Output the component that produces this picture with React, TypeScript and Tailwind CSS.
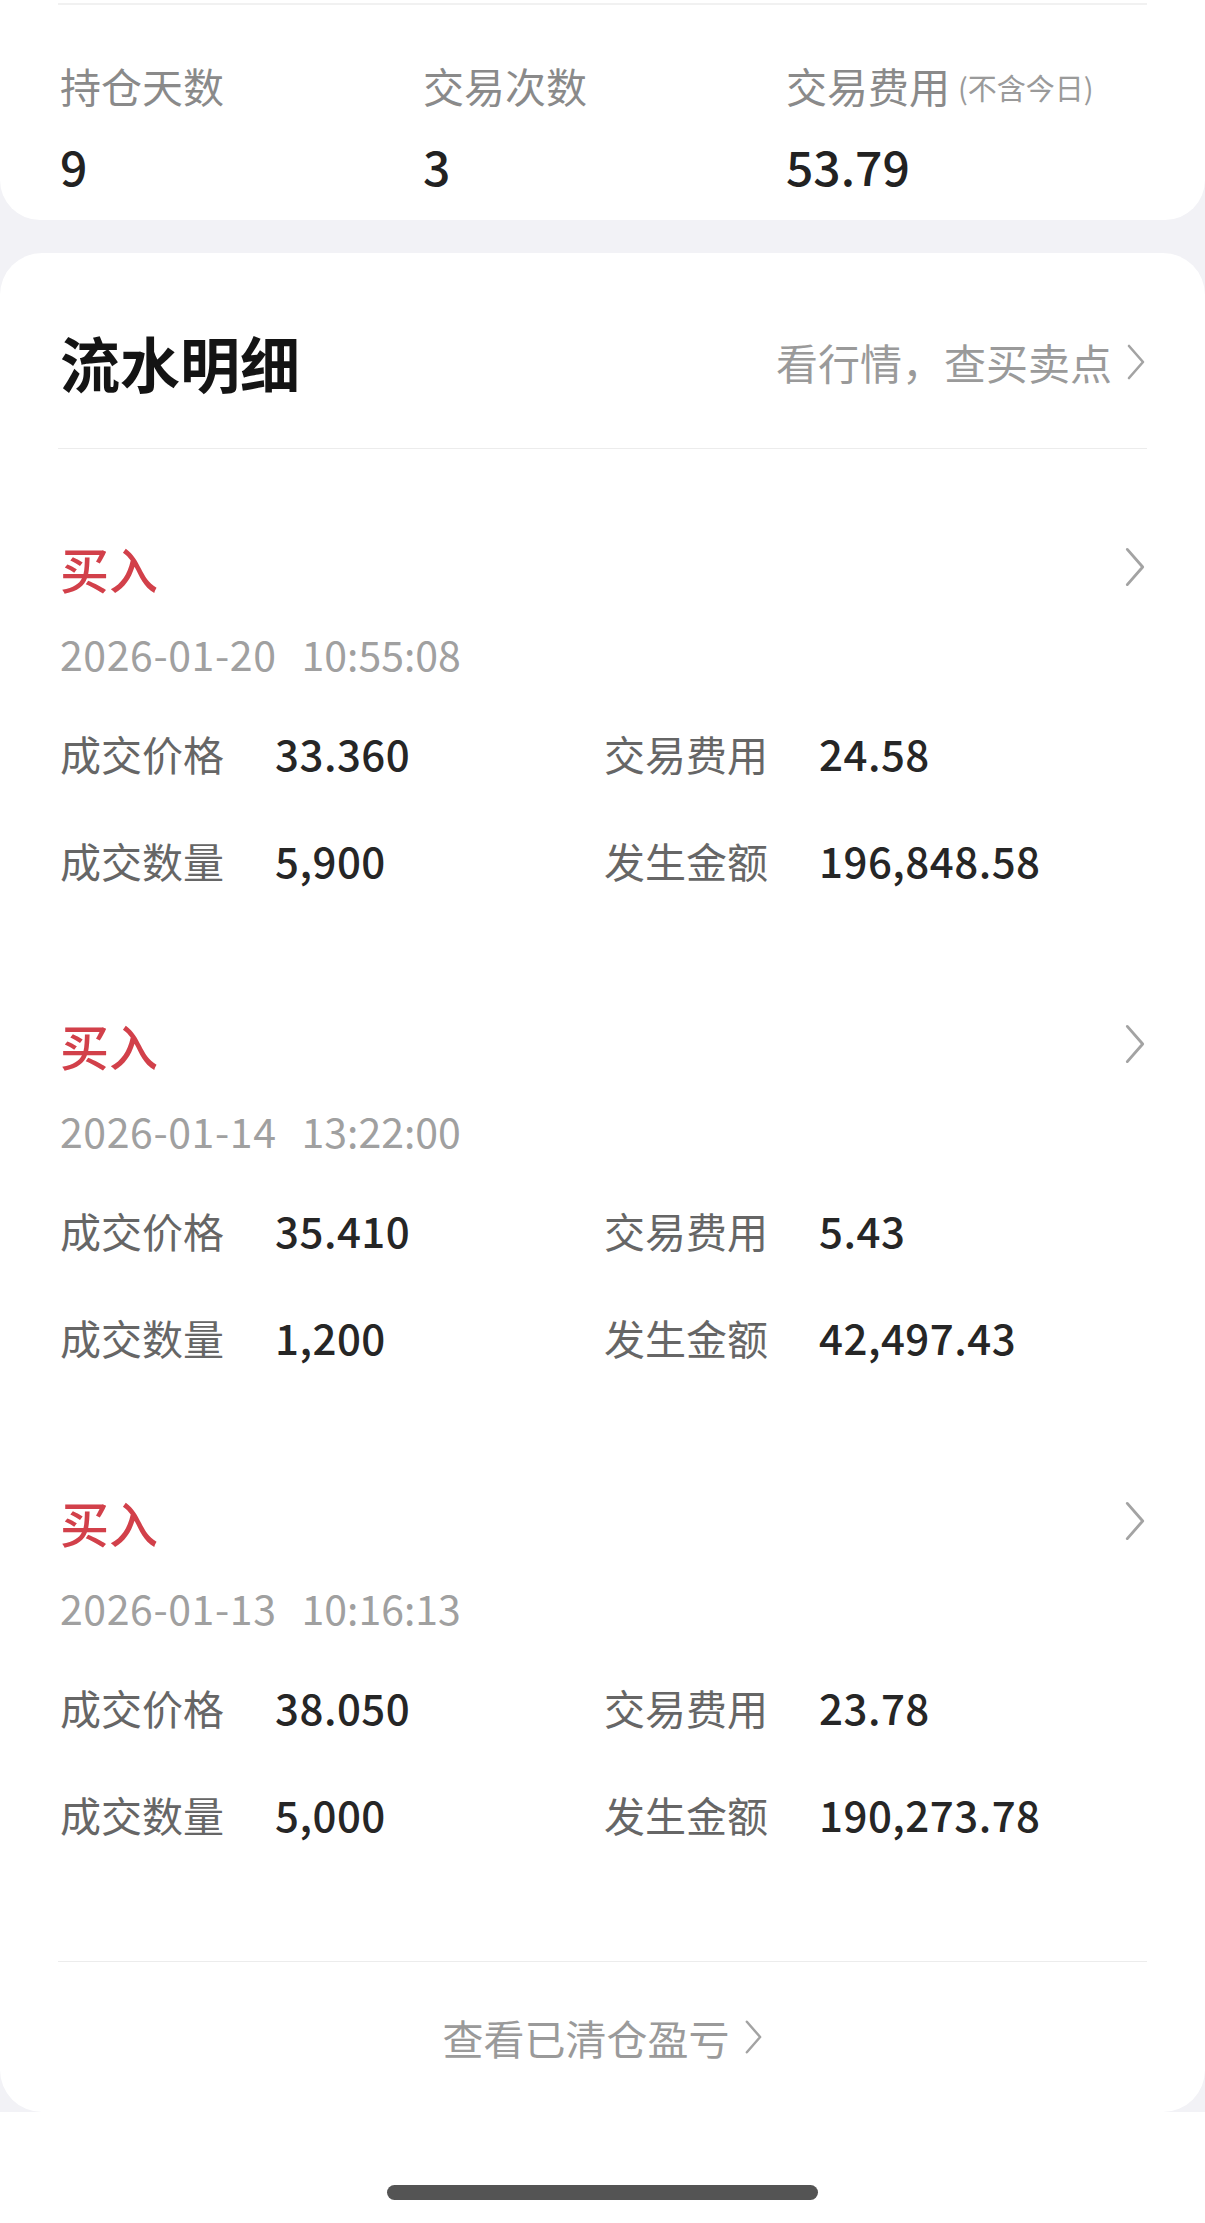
import React from "react";

interface Trade {
  side: string;
  date: string;
  time: string;
  price: string;
  fee: string;
  qty: string;
  amount: string;
}

const trades: Trade[] = [
  { side: "买入", date: "2026-01-20", time: "10:55:08", price: "33.360", fee: "24.58", qty: "5,900", amount: "196,848.58" },
  { side: "买入", date: "2026-01-14", time: "13:22:00", price: "35.410", fee: "5.43", qty: "1,200", amount: "42,497.43" },
  { side: "买入", date: "2026-01-13", time: "10:16:13", price: "38.050", fee: "23.78", qty: "5,000", amount: "190,273.78" },
];

const Chevron = ({ className }: { className?: string }) => (
  <svg viewBox="0 0 20 36" className={className} fill="none">
    <path d="M3 2 L17 18 L3 34" stroke="currentColor" strokeWidth="2.6" strokeLinecap="round" strokeLinejoin="round" />
  </svg>
);

const Field = ({ label, value }: { label: string; value: string }) => (
  <div className="flex items-center h-[40px]">
    <span className="w-[215px] text-[41px] leading-none text-[#666666]">{label}</span>
    <span className="text-[42px] leading-none font-medium tracking-[0.5px] text-[#262626]">{value}</span>
  </div>
);

const TradeItem = ({ t }: { t: Trade }) => (
  <div className="pt-[95px] pb-[46px]">
    <div className="flex items-center justify-between h-[46px]">
      <span className="text-[49px] leading-none font-medium text-[#d2404a]">{t.side}</span>
      <Chevron className="w-[22px] h-[42px] text-[#a3a3a3] mr-[1px]" />
    </div>
    <div className="mt-[43px] h-[40px] flex items-center gap-[25px] text-[41px] leading-none text-[#a0a0a0]">
      <span className="tracking-[0.6px]">{t.date}</span>
      <span>{t.time}</span>
    </div>
    <div className="mt-[60px] grid grid-cols-[544px_1fr]">
      <Field label="成交价格" value={t.price} />
      <Field label="交易费用" value={t.fee} />
    </div>
    <div className="mt-[67px] grid grid-cols-[544px_1fr]">
      <Field label="成交数量" value={t.qty} />
      <Field label="发生金额" value={t.amount} />
    </div>
  </div>
);

export default function App() {
  return (
    <div
      className="w-[1205px] h-[2223px] bg-[#f2f2f6] flex flex-col"
      style={{ fontFamily: '"Noto Sans CJK SC", "Noto Sans", sans-serif' }}
    >
      {/* summary card */}
      <div className="h-[220px] bg-white rounded-b-[40px] px-[58px] pt-[3px]">
        <div className="h-[2px] bg-[#f1f1f1]" />
        <div className="grid grid-cols-[363px_363px_1fr] pl-[2px] pt-[58px]">
          {[
            ["持仓天数", "9"],
            ["交易次数", "3"],
            ["交易费用", "53.79"],
          ].map(([label, value], i) => (
            <div key={label} className="flex flex-col">
              <div className="h-[44px] flex items-center">
                <span className="text-[41px] leading-none text-[#8a8a8a]">{label}</span>
                {i === 2 && <span className="ml-[8px] mt-[4px] text-[29px] leading-none text-[#9a9a9a]">(不含今日)</span>}
              </div>
              <div className="mt-[35px] h-[46px] flex items-center text-[48px] leading-none font-medium text-[#222222]">
                {value}
              </div>
            </div>
          ))}
        </div>
      </div>

      {/* trade list card */}
      <div className="mt-[33px] h-[1859px] bg-white rounded-[42px] px-[58px] flex flex-col">
        <div className="h-[195px] pt-[22px] pl-[2px] flex items-center justify-between">
          <span className="text-[60px] leading-none font-bold text-[#141414]">流水明细</span>
          <div className="flex items-center gap-[14px] text-[42px] leading-none text-[#9a9a9a]">
            <span>看行情，查买卖点</span>
            <Chevron className="w-[20px] h-[38px] text-[#a3a3a3] mr-[1px]" />
          </div>
        </div>
        <div className="h-[1px] bg-[#ececec]" />
        <div className="pl-[2px]">
          {trades.map((t, i) => (
            <TradeItem key={i} t={t} />
          ))}
        </div>
        <div className="mt-[81px] h-[1px] bg-[#ececec]" />
        <div className="flex-1 flex items-center justify-center gap-[14px] text-[41px] leading-none text-[#9a9a9a]">
          <span>查看已清仓盈亏</span>
          <Chevron className="w-[19px] h-[38px] text-[#a3a3a3]" />
        </div>
      </div>

      {/* home indicator */}
      <div className="flex-1 bg-white flex justify-center pt-[73px]">
        <div className="w-[431px] h-[15px] rounded-full bg-[#545454]" />
      </div>
    </div>
  );
}
